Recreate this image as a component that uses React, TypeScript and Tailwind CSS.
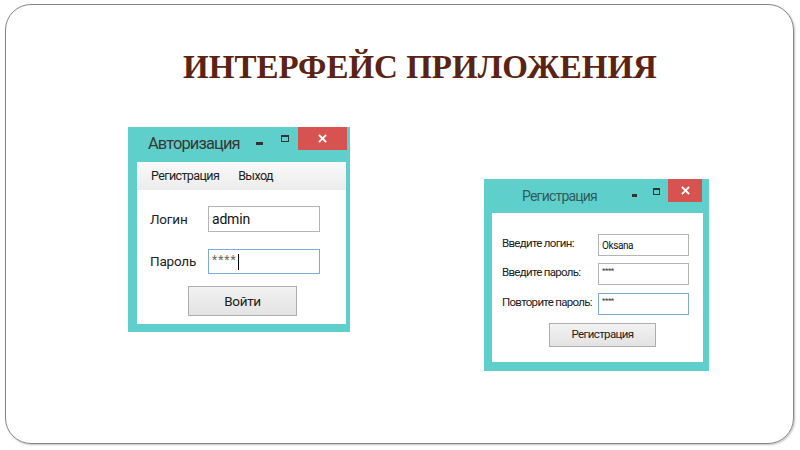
import React from "react";

const ui = { fontFamily: "Roboto, 'Noto Sans', sans-serif" };

function Caption({
  title,
  titleClass,
  titlePad,
  minClass,
  maxClass,
  closeClass,
}: {
  title: string;
  titleClass: string;
  titlePad: string;
  minClass: string;
  maxClass: string;
  closeClass: string;
}) {
  return (
    <div className="flex h-full items-start">
      <div className={`flex-1 self-center whitespace-nowrap ${titlePad} ${titleClass}`}>{title}</div>
      <div className={minClass} />
      <div className={maxClass} />
      <div className={closeClass}>
        <svg width="9" height="9" viewBox="0 0 9 9">
          <path d="M1.5 1.5 L7.5 7.5 M7.5 1.5 L1.5 7.5" stroke="#fff" strokeWidth="1.8" strokeLinecap="square" />
        </svg>
      </div>
    </div>
  );
}

function LoginWindow() {
  return (
    <div className="w-[222px] h-[205px] bg-[#5fcfcb] flex flex-col shrink-0" style={ui}>
      <div className="h-[35px]">
        <Caption
          title="Авторизация"
          titleClass="text-[16.5px] tracking-[-0.9px] text-[#383838] leading-none pb-[1px]"
          titlePad="pl-[20px]"
          minClass="w-[7px] h-[3px] bg-[#333] mt-[15px] mr-[18px]"
          maxClass="w-[8px] h-[7px] border border-[#333] border-t-[2px] mt-[8px] mr-[9px]"
          closeClass="w-[49px] h-[23px] bg-[#d65352] flex items-center justify-center mr-[3px]"
        />
      </div>
      <div className="flex-1 ml-[9px] mr-[4px] mb-[8px] bg-white flex flex-col">
        <div className="h-[28px] bg-gradient-to-b from-[#fafafa] to-[#ececec] flex items-center gap-[19px] pl-[14px] text-[12.5px] tracking-[-0.6px] text-[#222]">
          <span>Регистрация</span>
          <span>Выход</span>
        </div>
        <div className="flex items-center mt-[16px]">
          <div className="w-[71px] pl-[13px] text-[13.5px] tracking-[-0.2px] text-[#222]">Логин</div>
          <div className="w-[112px] h-[26px] border border-[#b4b4b4] flex items-center pl-[3px] text-[14px] tracking-[-0.2px] text-[#111]">
            admin
          </div>
        </div>
        <div className="flex items-center mt-[17px]">
          <div className="w-[71px] pl-[13px] text-[13.5px] tracking-[-0.2px] text-[#222]">Пароль</div>
          <div className="w-[112px] h-[25px] border border-[#7eaad8] flex items-center pl-[3px]">
            <span className="text-[12px] text-[#666] tracking-[1px] leading-none mt-[-3px]">****</span>
            <span className="w-[1px] h-[16px] bg-black ml-[1px]" />
          </div>
        </div>
        <div className="mt-[12px] ml-[51px] w-[109px] h-[30px] border border-[#adadad] bg-gradient-to-b from-[#f2f2f2] to-[#e3e3e3] flex items-center justify-center text-[13.5px] tracking-[-0.3px] text-[#222]">
          Войти
        </div>
      </div>
    </div>
  );
}

function RegRow({ label, value, focused, top }: { label: string; value: React.ReactNode; focused?: boolean; top: string }) {
  return (
    <div className={`flex items-center ${top}`}>
      <div className="w-[106px] pl-[10px] pb-[3px] text-[11.5px] tracking-[-0.7px] text-[#222] leading-none whitespace-nowrap">
        {label}
      </div>
      <div
        className={`w-[91px] h-[22px] border flex items-center pl-[3px] ${
          focused ? "border-[#7eaad8]" : "border-[#b4b4b4]"
        }`}
      >
        {value}
      </div>
    </div>
  );
}

const stars = <span className="text-[8px] text-[#333] leading-none mt-[-6px] tracking-[-0.5px]">****</span>;

function RegisterWindow() {
  return (
    <div className="w-[225px] h-[192px] bg-[#5fcfcb] flex flex-col shrink-0 mt-[52px]" style={ui}>
      <div className="h-[34px]">
        <Caption
          title="Регистрация"
          titleClass="text-[14px] tracking-[-0.8px] text-[#2f5c5b] leading-none"
          titlePad="pl-[38px]"
          minClass="w-[5px] h-[3px] bg-[#333] mt-[15px] mr-[16px]"
          maxClass="w-[7px] h-[7px] border border-[#333] border-t-[2px] mt-[9px] mr-[8px]"
          closeClass="w-[34px] h-[23px] bg-[#d65352] flex items-center justify-center mr-[7px]"
        />
      </div>
      <div className="flex-1 ml-[8px] mr-[6px] mb-[9px] bg-white flex flex-col">
        <RegRow
          label="Введите логин:"
          top="mt-[21px]"
          value={<span className="text-[10px] tracking-[-0.4px] text-[#111]">Oksana</span>}
        />
        <RegRow label="Введите пароль:" top="mt-[7px]" value={stars} />
        <RegRow label="Повторите пароль:" top="mt-[8px]" value={stars} focused />
        <div className="mt-[8px] ml-[57px] w-[107px] h-[24px] border border-[#adadad] bg-gradient-to-b from-[#f2f2f2] to-[#e3e3e3] flex items-center justify-center text-[11.5px] tracking-[-0.6px] text-[#222]">
          Регистрация
        </div>
      </div>
    </div>
  );
}

export default function App() {
  return (
    <div className="w-[800px] h-[450px] bg-white overflow-hidden pt-[4px] pl-[5px]">
      <div className="w-[789px] h-[440px] rounded-[26px] border-[1.5px] border-[#858585] shadow-[1px_1px_2px_rgba(0,0,0,0.25)] flex flex-col">
        <h1
          className="mt-[46px] pl-[41px] text-center text-[33px] leading-[33px] font-bold text-[#5a2313]"
          style={{ fontFamily: "'Liberation Serif', 'Times New Roman', serif" }}
        >
          ИНТЕРФЕЙС ПРИЛОЖЕНИЯ
        </h1>
        <div className="flex items-start mt-[43px] pl-[122px] gap-[134px]">
          <LoginWindow />
          <RegisterWindow />
        </div>
      </div>
    </div>
  );
}
